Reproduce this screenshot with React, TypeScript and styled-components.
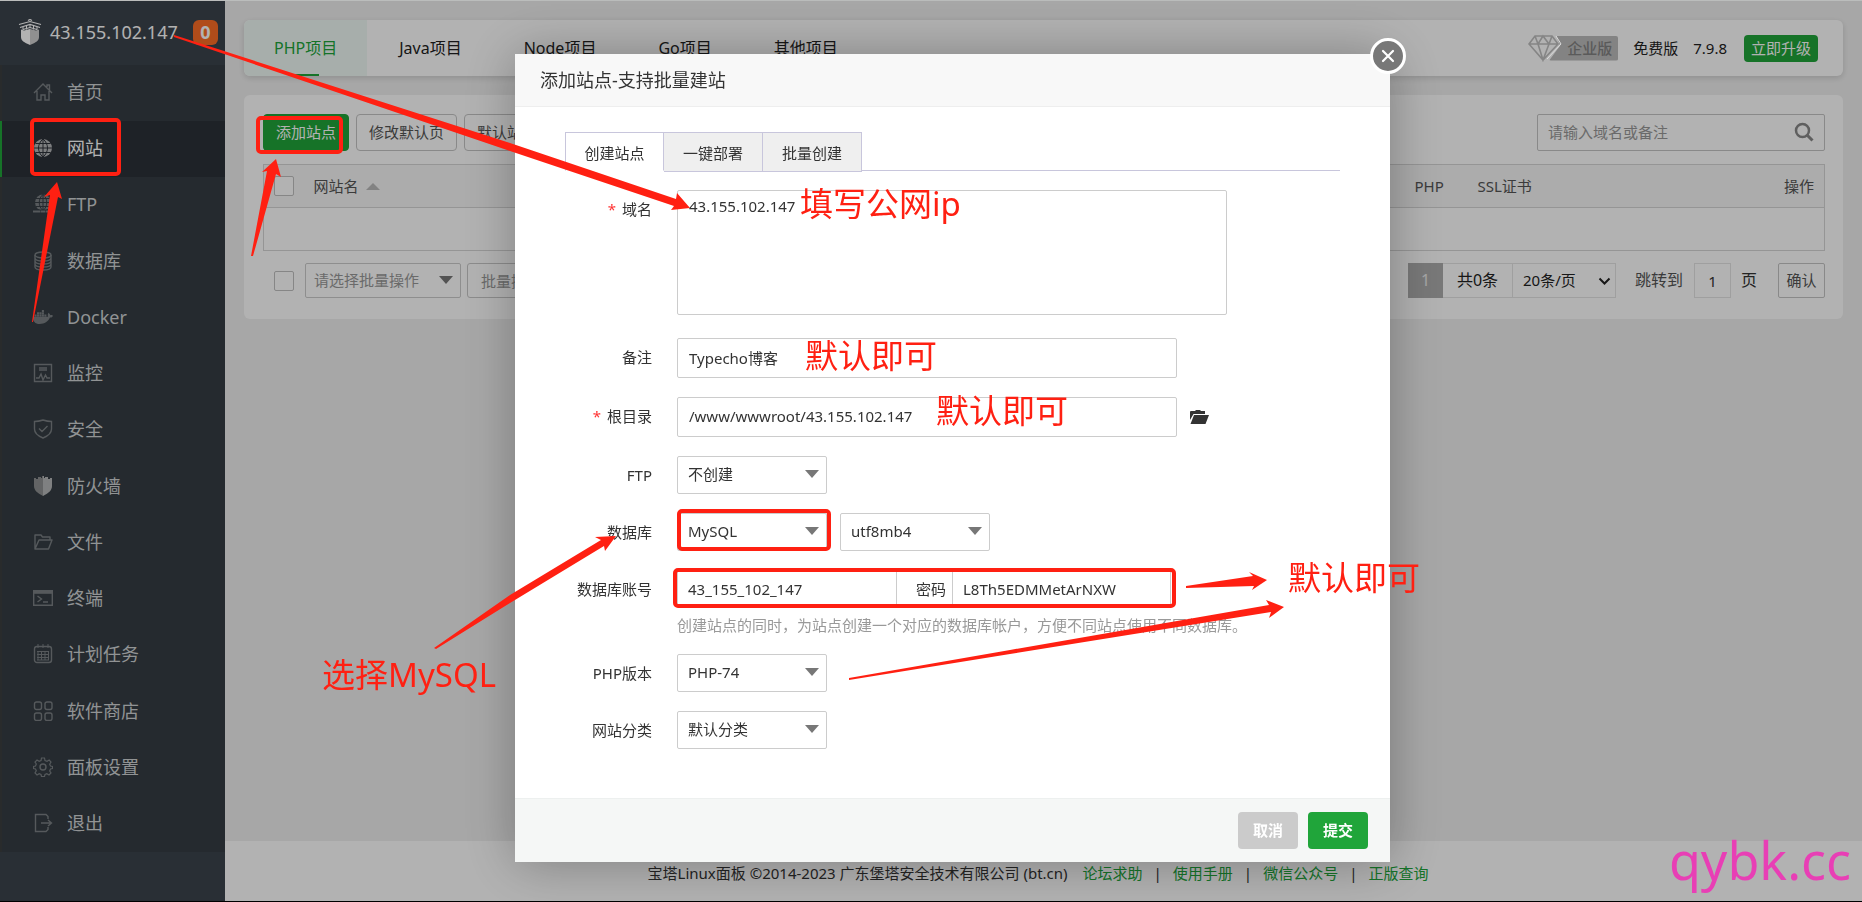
import React from "react";
import styled, { createGlobalStyle, css } from "styled-components";
import { FaDocker } from "react-icons/fa";

const font = '"Noto Sans", "Noto Sans CJK SC", sans-serif';
const green = "#20a53a";
const red = "#ff2012";

const GlobalStyle = createGlobalStyle`
  *, *::before, *::after { box-sizing: border-box; }
  body { margin: 0; font: 15px/20px ${font}; color: #333; background: #f0f0f0; }
  button, input, select, textarea { font: inherit; color: inherit; margin: 0; }
  button { cursor: pointer; }
`;

const Page = styled.div`
  display: flex;
  min-height: 100vh;
  border-top: 1px solid #bbbdbc;
  border-bottom: 1px solid #000;
`;

/* ---------- sidebar ---------- */

const Sidebar = styled.aside`
  flex: 0 0 225px;
  background: #3c444d;
`;

const Brand = styled.header`
  display: flex;
  align-items: center;
  height: 64px;
  padding: 0 7px 2px 18px;
  font-size: 18px;
  color: #fff;
  svg { width: 24px; height: 26px; margin-right: 8px; }
`;

const Badge = styled.span`
  width: 25px;
  margin-left: auto;
  border-radius: 6px;
  background: #fc6d26;
  font-weight: 700;
  line-height: 25px;
  text-align: center;
`;

const Menu = styled.ul`
  margin: 0;
  padding: 0;
  list-style: none;
  background: #353d44;
`;

const MenuItem = styled.li`
  height: 56px;
  &:nth-child(4n) { height: 57px; }
`;

const MenuLink = styled.a<{ $active?: boolean }>`
  display: flex;
  align-items: center;
  gap: 14px;
  height: 100%;
  padding: 0 0 2px 31px;
  border-left: 2px solid ${(p) => (p.$active ? green : "#3b3e40")};
  background: ${(p) => (p.$active ? "#2c3138" : "transparent")};
  color: ${(p) => (p.$active ? "#fff" : "#d0d3d5")};
  font-size: 18px;
  text-decoration: none;
  svg { width: 20px; height: 20px; color: ${(p) => (p.$active ? "#b4b6b8" : "#7b8084")}; }
`;

/* ---------- content ---------- */

const Content = styled.div`
  display: flex;
  flex: 1;
  flex-direction: column;
  min-width: 0;
`;

const Main = styled.main`
  display: flex;
  flex: 1;
  flex-direction: column;
  gap: 19px;
  padding: 19px;
`;

const TopBar = styled.div`
  display: flex;
  align-items: center;
  height: 56px;
  padding-right: 25px;
  border-radius: 6px;
  background: #fff;
  box-shadow: 0 2px 6px rgba(0, 0, 0, 0.15);
  overflow: hidden;
`;

const ProjectTabs = styled.nav`
  display: flex;
  gap: 2px;
  height: 100%;
  margin-right: auto;
`;

const ProjectTab = styled.a<{ $active?: boolean }>`
  position: relative;
  padding: 0 30px;
  color: ${(p) => (p.$active ? green : "#222")};
  background: ${(p) => (p.$active ? "#f0faf5" : "none")};
  font-size: 16px;
  line-height: 56px;
  text-decoration: none;
  ${(p) => p.$active && css`
    &::after {
      content: "";
      position: absolute;
      bottom: 0;
      left: 50%;
      width: 26px;
      height: 2px;
      margin-left: -13px;
      background: ${green};
    }
  `}
`;

const Edition = styled.span`
  display: flex;
  align-items: center;
  svg { width: 34px; height: 28px; margin-right: -13px; z-index: 1; }
`;

const EditionName = styled.span`
  padding: 0 6px 0 18px;
  border-radius: 2px;
  background: #bcbcbc;
  color: #828282;
  font-weight: 500;
  line-height: 25px;
  clip-path: polygon(7px 0, 100% 0, 100% 100%, 0 100%, 11px 10px);
`;

const Version = styled.span`
  margin-left: 15px;
  color: #222;
`;

const UpgradeButton = styled.button`
  height: 27px;
  margin-left: 17px;
  padding: 0 7px;
  border: 0;
  border-radius: 4px;
  background: ${green};
  color: #fff;
`;

const Card = styled.section`
  padding: 19px 18px 21px 19px;
  border-radius: 6px;
  background: #fff;
`;

const Toolbar = styled.div`
  display: flex;
  gap: 7px;
  margin-bottom: 13px;
`;

const ToolButton = styled.button<{ $primary?: boolean }>`
  height: 37px;
  padding: 0 12px 2px;
  border: 1px solid ${(p) => (p.$primary ? green : "#c4c4c4")};
  border-radius: 4px;
  background: ${(p) => (p.$primary ? green : "#fff")};
  color: ${(p) => (p.$primary ? "#fff" : "#555")};
`;

const SearchBox = styled.div`
  position: relative;
  width: 288px;
  margin-left: auto;
`;

const SearchInput = styled.input`
  width: 100%;
  height: 37px;
  padding: 0 40px 2px 10px;
  border: 1px solid #c4c4c4;
  border-radius: 2px;
  background: #fff;
  &::placeholder { color: #999; opacity: 1; }
`;

const SearchButton = styled.button`
  position: absolute;
  top: 8px;
  right: 11px;
  width: 20px;
  height: 20px;
  padding: 0;
  border: 0;
  background: none;
  color: #888;
`;

const SiteTable = styled.table`
  width: 100%;
  border: 1px solid #d6d6d6;
  border-collapse: collapse;
  table-layout: fixed;
  color: #555;
  th {
    height: 43px;
    padding: 0 10px;
    border-bottom: 1px solid #d6d6d6;
    background: #f6f6f6;
    font-weight: 400;
    text-align: left;
  }
  td { height: 43px; }
  th:last-child { text-align: right; }
`;

const Check = styled.input.attrs({ type: "checkbox" })`
  display: block;
  width: 20px;
  height: 20px;
  border: 1px solid #c0c0c0;
  border-radius: 2px;
  appearance: none;
  background: #fff;
`;

const SortCaret = styled.span`
  display: inline-block;
  margin-left: 7px;
  border: solid transparent;
  border-width: 0 7px 7px;
  border-bottom-color: #bbb;
  vertical-align: 2px;
`;

const TableFooter = styled.div`
  display: flex;
  align-items: center;
  gap: 6px;
  margin-top: 12px;
  padding-left: 11px;
  ${Check} { margin-right: 5px; }
`;

const BatchButton = styled.button`
  height: 35px;
  padding: 0 13px;
  border: 1px solid #c8c8c8;
  border-radius: 3px;
  background: #fff;
  color: #999;
`;

const Pager = styled.div`
  display: flex;
  align-items: center;
  height: 35px;
  margin-left: auto;
  font-size: 16px;
  line-height: 33px;
`;

const PageNumber = styled.span`
  width: 35px;
  background: #adadad;
  color: #eee;
  line-height: 35px;
  text-align: center;
`;

const PageTotal = styled.span`
  width: 70px;
  border: 1px solid #e4e4e4;
  border-width: 1px 1px 1px 0;
  color: #222;
  text-align: center;
`;

const PageSize = styled.div`
  position: relative;
  select {
    width: 103px;
    height: 35px;
    padding: 0 10px;
    border: 1px solid #e4e4e4;
    border-left: 0;
    appearance: none;
    background: #fff;
    color: #222;
    font-size: 15px;
  }
  svg { position: absolute; top: 12px; right: 5px; width: 13px; height: 12px; }
`;

const PageText = styled.label`
  margin-left: 19px;
  color: #555;
`;

const PageInput = styled.input`
  width: 37px;
  height: 35px;
  margin: 0 10px 0 11px;
  border: 1px solid #e4e4e4;
  background: #fff;
  font-size: 15px;
  text-align: center;
`;

const ConfirmButton = styled.button`
  width: 47px;
  height: 35px;
  margin-left: 21px;
  padding: 0;
  border: 1px solid #c4c4c4;
  border-radius: 2px;
  background: #fff;
  color: #555;
  font-size: 15px;
`;

const PageFooter = styled.footer`
  display: flex;
  align-items: center;
  justify-content: center;
  height: 60px;
  padding-top: 3px;
  background: #fff;
  color: #333;
  white-space: pre;
  a { padding: 0 11px; color: ${green}; text-decoration: none; }
  a:first-of-type { padding-left: 15px; }
`;

/* ---------- dialog ---------- */

const Overlay = styled.div`
  position: fixed;
  inset: 1px 0;
  display: flex;
  align-items: flex-start;
  justify-content: center;
  padding: 53px 0 0 43px;
  background: rgba(0, 0, 0, 0.3);
`;

const Dialog = styled.div`
  position: relative;
  width: 875px;
  background: #fff;
  box-shadow: 1px 1px 50px rgba(0, 0, 0, 0.3);
`;

const DialogTitle = styled.h2`
  margin: 0;
  padding-left: 25px;
  border-bottom: 1px solid #eee;
  background: #f8f8f8;
  font-size: 18px;
  font-weight: 400;
  line-height: 52px;
`;

const CloseButton = styled.button`
  position: absolute;
  top: -16px;
  right: -16px;
  width: 36px;
  height: 36px;
  padding: 0;
  border: 3px solid #fff;
  border-radius: 50%;
  background: #787878;
  color: #fff;
  svg { display: block; margin: auto; width: 14px; height: 14px; }
`;

const DialogBody = styled.div`
  padding: 25px 50px 49px;
`;

const DialogTabs = styled.div`
  display: flex;
  height: 39px;
  margin-bottom: 19px;
  border-bottom: 1px solid #c8c6dc;
`;

const DialogTab = styled.button<{ $active?: boolean }>`
  width: 99px;
  height: ${(p) => (p.$active ? 39 : 40)}px;
  padding: 2px 0 0;
  border: 1px solid #c8c6dc;
  border-bottom-color: ${(p) => (p.$active ? "#fff" : "#c8c6dc")};
  background: ${(p) => (p.$active ? "#fff" : "#efefef")};
  & + & { border-left: 0; }
`;

const Form = styled.form`
  display: flex;
  flex-direction: column;
  gap: 19px;
`;

const Field = styled.div<{ $tall?: boolean }>`
  display: grid;
  grid-template-columns: 87px 1fr;
  column-gap: 25px;
  margin-bottom: ${(p) => (p.$tall ? 4 : 0)}px;
`;

const Label = styled.label<{ $required?: boolean }>`
  line-height: 38px;
  text-align: right;
  white-space: nowrap;
  ${(p) => p.$required && css`
    &::before { content: "*"; margin-right: 6px; color: #f33; }
  `}
`;

const Controls = styled.div`
  display: flex;
  align-items: center;
  gap: 13px;
`;

const control = css`
  border: 1px solid #ccc;
  border-radius: 2px;
  background: #fff;
  outline: 0;
`;

const DomainArea = styled.textarea`
  ${control}
  display: block;
  width: 550px;
  height: 125px;
  padding: 5px 11px;
  resize: none;
`;

const TextInput = styled.input`
  ${control}
  width: 500px;
  height: 40px;
  padding: 0 11px 2px;
`;

const FolderButton = styled.button`
  width: 20px;
  height: 20px;
  padding: 0;
  border: 0;
  background: none;
  svg { display: block; }
`;

const SelectBox = styled.div<{ $batch?: boolean }>`
  position: relative;
  width: ${(p) => (p.$batch ? 156 : 150)}px;
  select {
    ${control}
    display: block;
    width: 100%;
    height: ${(p) => (p.$batch ? 35 : 38)}px;
    padding: 0 ${(p) => (p.$batch ? 8 : 10)}px 2px;
    color: ${(p) => (p.$batch ? "#999" : "inherit")};
    appearance: none;
  }
  &::after {
    content: "";
    position: absolute;
    top: 50%;
    right: 8px;
    margin-top: -5px;
    border: solid transparent;
    border-width: 8px 7px 0;
    border-top-color: #777;
    pointer-events: none;
  }
`;

const Account = styled.div`
  display: flex;
  width: 494px;
  height: 38px;
  border: 1px solid #ccc;
  border-radius: 2px;
  label { flex: 0 0 55px; padding-right: 6px; line-height: 36px; text-align: right; }
  input {
    width: 219px;
    padding: 0 10px;
    border: 0;
    border-right: 1px solid #ccc;
    background: #fff;
  }
  label + input { border-left: 1px solid #ccc; }
`;

const Hint = styled.p`
  margin: 7px 0 0;
  color: #999;
`;

const DialogFooter = styled.div`
  display: flex;
  justify-content: flex-end;
  gap: 10px;
  padding: 13px 22px;
  border-top: 1px solid #edf0ef;
  background: #f5f7f6;
`;

const FooterButton = styled.button<{ $primary?: boolean }>`
  width: 60px;
  height: 37px;
  padding: 0 0 2px;
  border: 0;
  border-radius: 4px;
  background: ${(p) => (p.$primary ? green : "#cbcbcb")};
  color: #fff;
  font-weight: 700;
`;

/* ---------- hand-placed notes over the screen ---------- */

const NoteLayer = styled.div`
  position: fixed;
  inset: 0;
  pointer-events: none;
  svg { position: absolute; inset: 0; width: 100%; height: 100%; }
`;

const Note = styled.span<{ $x: number; $y: number }>`
  position: absolute;
  left: ${(p) => p.$x}px;
  top: ${(p) => p.$y}px;
  color: ${red};
  font-size: 33px;
  line-height: 40px;
  white-space: nowrap;
`;

const Watermark = styled.span`
  position: absolute;
  right: 11px;
  bottom: 12px;
  color: #e83fb5;
  font-size: 52px;
  line-height: 60px;
`;

/* ---------- icons ---------- */

const Line = ({ children }: { children: React.ReactNode }) => (
  <svg viewBox="0 0 20 20" fill="none" stroke="currentColor" strokeWidth="1.4">{children}</svg>
);

const icons = {
  home: <Line><path d="M1 11 10 2l9 9M4 9v9h4v-5h4v5h4V9M14 5V3h2.500v5" /></Line>,
  globe: (
    <svg viewBox="0 0 20 20"><circle cx="10" cy="10" r="9" fill="currentColor" />
      <path d="M10 1v18M1 10h18M2.500 5.500h15M2.500 14.500h15M10 1C4 6 4 14 10 19M10 1c6 5 6 13 0 18" fill="none" stroke="#2c3138" strokeWidth="1" /></svg>
  ),
  ftp: (
    <svg viewBox="0 0 20 20"><circle cx="10" cy="8.500" r="8" fill="currentColor" />
      <path d="M10 0v17M2 8.500h16M3 4.500h14M3 12.500h14M10 .5c-5 4-5 12 0 16M10 .5c5 4 5 12 0 16" fill="none" stroke="#353d44" />
      <path d="M0 17.500h20" stroke="#353d44" strokeWidth="4" /><path d="M0 17.500h7M13 17.500h7M7.500 17.500h5" stroke="currentColor" strokeWidth="2" /></svg>
  ),
  db: <Line><ellipse cx="10" cy="4" rx="8" ry="3" /><path d="M2 4v12c0 4 16 4 16 0V4M2 7c0 4 16 4 16 0M2 10c0 4 16 4 16 0M2 13c0 4 16 4 16 0" /></Line>,
  monitor: <Line><path d="M1.500 1.500h17v17h-17zM6 5h8M6 7h8M3 15h3l2-4 2 6 2.500-5 1.500 3h3" /></Line>,
  shieldCheck: <Line><path d="M10 1c3 1 6 1.500 8.500 1.500V10c0 4-3.500 7-8.500 9-5-2-8.500-5-8.500-9V2.500C4 2.500 7 2 10 1zM6 9.500l3 3 5.500-5.500" /></Line>,
  firewall: (
    <svg viewBox="0 0 20 20"><path d="M10 0v20C4 17 1 14 1 10V2h2v1h2V1h3v1h1V0z" fill="#8e9091" />
      <path d="M10 0h1v2h1V1h3v2h2V2h2v8c0 4-3 7-9 10z" fill="#b7b8b9" /></svg>
  ),
  folder: <Line><path d="M2 17V3h6l1.500 2H17v3M2 17h13.500L19 8H6z" strokeLinejoin="round" /></Line>,
  terminal: <Line><path d="M.7 2.700h18.600v14.600H.7zM.7 5h18.600" /><path d="M1 4h18" strokeWidth="2.500" /><path d="m4.500 8 4 3-4 3M10 14h5" /></Line>,
  calendar: <Line><rect x="1.500" y="2.500" width="17" height="16" rx="2.500" /><path d="M5 0v4M10 0v4M15 0v4M4 7.500h12M4 10.500h12M4 13.500h12M5 8v8M8.500 8v8M12 8v8M15.500 8v8M4 16h12" strokeWidth="1" /></Line>,
  apps: <Line><rect x="1.500" y="1" width="7" height="7.500" rx="2" /><rect x="12" y="1" width="7" height="7.500" rx="2" /><rect x="1.500" y="12" width="7" height="7.500" rx="2" /><rect x="12" y="12" width="7" height="7.500" rx="2" /></Line>,
  gear: <Line><circle cx="10" cy="10" r="3" /><path d="M8.500 1h3l.5 2.500 2 .8 2.200-1.300 1.800 2-1.300 2.200.8 1.800 2 .5v2l-2 .5-.8 2L18 16l-2 2-2.200-1.300-1.800.8-.5 2h-3l-.5-2-1.800-.8L4 18l-2-2 1.300-2.200-.8-1.800-2-.5v-2l2-.5.8-2L2 5l2-2 2.200 1.300 1.800-.8z" strokeWidth="1.200" /></Line>,
  exit: <Line><path d="M15 6V3.500L13 1.500H2.500v17H13l2-2V14M8 10h10M15 7l3.500 3-3.500 3" /></Line>,
};

const Logo = () => (
  <svg viewBox="0 0 24 26" fill="none" aria-hidden="true">
    <path d="M10 1.500 12 .5l2 1M1 5.500 12 2.500l11 3M2 8.500l10-3 10 3M5 10.500l7-2 7 2" stroke="#fff" strokeWidth="1.200" />
    <path d="M5 8v3M8.500 7v3.500M12 6v3M15.500 7v3.500M19 8v3" stroke="#fff" />
    <path d="M3 10.500l3 1 6-1.500v16c-6-2.500-9-4.500-9-8z" fill="#fff" />
    <path d="M21 10.500l-3 1-6-1.500v16c6-2.500 9-4.500 9-8z" fill="#cfcfcf" />
  </svg>
);

const Diamond = () => (
  <svg viewBox="0 0 34 28" fill="none" stroke="#858585" strokeWidth="1.600" aria-hidden="true">
    <path d="M7 2h17l6 8-15 16L1 10zM1 10h29M10 10l5 16 6-16M7 2l3 8 5-8 6 8 3-8" />
    <path d="M28 2l5 8-14 15" stroke="#dcdcdc" strokeWidth="1" />
  </svg>
);

const menu: { label: string; icon: React.ReactNode }[] = [
  { label: "首页", icon: icons.home },
  { label: "网站", icon: icons.globe },
  { label: "FTP", icon: icons.ftp },
  { label: "数据库", icon: icons.db },
  { label: "Docker", icon: <FaDocker /> },
  { label: "监控", icon: icons.monitor },
  { label: "安全", icon: icons.shieldCheck },
  { label: "防火墙", icon: icons.firewall },
  { label: "文件", icon: icons.folder },
  { label: "终端", icon: icons.terminal },
  { label: "计划任务", icon: icons.calendar },
  { label: "软件商店", icon: icons.apps },
  { label: "面板设置", icon: icons.gear },
  { label: "退出", icon: icons.exit },
];

const projectTabs = ["PHP项目", "Java项目", "Node项目", "Go项目", "其他项目"];

const arrows = [
  "174,35 510,143 676,199 677,193 690,208 671,210 674,206 510,151 174,37",
  "32,322 50,195 44,197 57,182 62,199 58,197 33,322",
  "251,256 267,171 262,172 276,159 281,177 276,174 253,256",
  "434,648 510,595 601,540 595,537 616,536 605,551 604,546 510,603 436,649",
  "1186,586 1253,576 1249,572 1267,580 1252,590 1254,586 1186,588",
  "849,678 1010,650 1269,605 1266,600 1284,607 1269,618 1271,612 1010,654 849,680",
];

const frames = [
  { x: 32, y: 120, w: 87, h: 54 },
  { x: 258, y: 118, w: 83, h: 34 },
  { x: 679, y: 511, w: 150, h: 38 },
  { x: 675, y: 570, w: 499, h: 36 },
];

function FormSelect({ id, value }: { id: string; value: string }) {
  return (
    <SelectBox>
      <select id={id} defaultValue={value} aria-label={value}><option>{value}</option></select>
    </SelectBox>
  );
}

function SiteDialog() {
  return (
    <Overlay>
      <Dialog role="dialog" aria-labelledby="dialog-title">
        <DialogTitle id="dialog-title">添加站点-支持批量建站</DialogTitle>
        <CloseButton type="button" aria-label="关闭">
          <svg viewBox="0 0 14 14" stroke="currentColor" strokeWidth="2.200" strokeLinecap="round"><path d="m2 2 10 10M12 2 2 12" /></svg>
        </CloseButton>
        <DialogBody>
          <DialogTabs>
            <DialogTab $active>创建站点</DialogTab>
            <DialogTab>一键部署</DialogTab>
            <DialogTab>批量创建</DialogTab>
          </DialogTabs>
          <Form id="site-form">
            <Field $tall>
              <Label $required htmlFor="domain">域名</Label>
              <DomainArea id="domain" defaultValue="43.155.102.147" />
            </Field>
            <Field>
              <Label htmlFor="remark">备注</Label>
              <TextInput id="remark" defaultValue="Typecho博客" />
            </Field>
            <Field>
              <Label $required htmlFor="root-dir">根目录</Label>
              <Controls>
                <TextInput id="root-dir" defaultValue="/www/wwwroot/43.155.102.147" />
                <FolderButton type="button" aria-label="选择目录">
                  <svg viewBox="0 0 20 20" width="20" height="20" fill="#333"><path d="M0 13V4.500L1 4h4l1-1h4l1 1h4v3H3.500zM4 8h15l-3.500 9H.5z" /></svg>
                </FolderButton>
              </Controls>
            </Field>
            <Field>
              <Label htmlFor="ftp">FTP</Label>
              <FormSelect id="ftp" value="不创建" />
            </Field>
            <Field>
              <Label htmlFor="database">数据库</Label>
              <Controls>
                <FormSelect id="database" value="MySQL" />
                <FormSelect id="charset" value="utf8mb4" />
              </Controls>
            </Field>
            <Field>
              <Label htmlFor="db-user">数据库账号</Label>
              <div>
                <Account>
                  <input id="db-user" defaultValue="43_155_102_147" />
                  <label htmlFor="db-password">密码</label>
                  <input id="db-password" defaultValue="L8Th5EDMMetArNXW" />
                </Account>
                <Hint>创建站点的同时，为站点创建一个对应的数据库帐户，方便不同站点使用不同数据库。</Hint>
              </div>
            </Field>
            <Field>
              <Label htmlFor="php">PHP版本</Label>
              <FormSelect id="php" value="PHP-74" />
            </Field>
            <Field>
              <Label htmlFor="category">网站分类</Label>
              <FormSelect id="category" value="默认分类" />
            </Field>
          </Form>
        </DialogBody>
        <DialogFooter>
          <FooterButton type="button">取消</FooterButton>
          <FooterButton $primary type="submit" form="site-form">提交</FooterButton>
        </DialogFooter>
      </Dialog>
    </Overlay>
  );
}

export default function App() {
  return (
    <>
      <GlobalStyle />
      <Page>
        <Sidebar>
          <Brand><Logo />43.155.102.147<Badge>0</Badge></Brand>
          <Menu>
            {menu.map((m) => (
              <MenuItem key={m.label}>
                <MenuLink href="#" $active={m.label === "网站"}>{m.icon}{m.label}</MenuLink>
              </MenuItem>
            ))}
          </Menu>
        </Sidebar>
        <Content>
          <Main>
            <TopBar>
              <ProjectTabs>
                {projectTabs.map((t, i) => <ProjectTab key={t} href="#" $active={i === 0}>{t}</ProjectTab>)}
              </ProjectTabs>
              <Edition><Diamond /><EditionName>企业版</EditionName></Edition>
              <Version>免费版</Version>
              <Version>7.9.8</Version>
              <UpgradeButton>立即升级</UpgradeButton>
            </TopBar>
            <Card>
              <Toolbar>
                <ToolButton $primary>添加站点</ToolButton>
                <ToolButton>修改默认页</ToolButton>
                <ToolButton>默认站点</ToolButton>
                <SearchBox>
                  <SearchInput placeholder="请输入域名或备注" aria-label="搜索" />
                  <SearchButton aria-label="搜索">
                    <svg viewBox="0 0 20 20" fill="none" stroke="currentColor" strokeWidth="2.500"><circle cx="8.500" cy="8.500" r="6.500" /><path d="m13 13 5.500 5.500" strokeWidth="3" /></svg>
                  </SearchButton>
                </SearchBox>
              </Toolbar>
              <SiteTable>
                <colgroup><col width="40" /><col /><col width="63" /><col width="200" /><col width="157" /></colgroup>
                <thead>
                  <tr>
                    <th><Check aria-label="全选" /></th>
                    <th>网站名<SortCaret /></th>
                    <th>PHP</th>
                    <th>SSL证书</th>
                    <th>操作</th>
                  </tr>
                </thead>
                <tbody><tr><td colSpan={5} /></tr></tbody>
              </SiteTable>
              <TableFooter>
                <Check aria-label="批量选择" />
                <SelectBox $batch>
                  <select aria-label="批量操作"><option>请选择批量操作</option></select>
                </SelectBox>
                <BatchButton>批量操作</BatchButton>
                <Pager>
                  <PageNumber>1</PageNumber>
                  <PageTotal>共0条</PageTotal>
                  <PageSize>
                    <select aria-label="每页条数"><option>20条/页</option></select>
                    <svg viewBox="0 0 13 12" fill="none" stroke="#222" strokeWidth="2"><path d="m1.500 3.500 5 5 5-5" /></svg>
                  </PageSize>
                  <PageText htmlFor="page">跳转到</PageText>
                  <PageInput id="page" defaultValue="1" />
                  页
                  <ConfirmButton>确认</ConfirmButton>
                </Pager>
              </TableFooter>
            </Card>
          </Main>
          <PageFooter>
            宝塔Linux面板 ©2014-2023 广东堡塔安全技术有限公司 (bt.cn)
            <a href="#">论坛求助</a>|<a href="#">使用手册</a>|<a href="#">微信公众号</a>|<a href="#">正版查询</a>
          </PageFooter>
        </Content>
      </Page>
      <SiteDialog />
      <NoteLayer>
        <svg aria-hidden="true">
          {arrows.map((p) => <polygon key={p} points={p} fill={red} />)}
          {frames.map((f) => (
            <rect key={f.x} x={f.x} y={f.y} width={f.w} height={f.h} rx="3" fill="none" stroke={red} strokeWidth="4" />
          ))}
        </svg>
        <Note $x={800} $y={184}>填写公网ip</Note>
        <Note $x={805} $y={336}>默认即可</Note>
        <Note $x={936} $y={391}>默认即可</Note>
        <Note $x={1288} $y={558}>默认即可</Note>
        <Note $x={322} $y={655}>选择MySQL</Note>
        <Watermark>qybk.cc</Watermark>
      </NoteLayer>
    </>
  );
}
